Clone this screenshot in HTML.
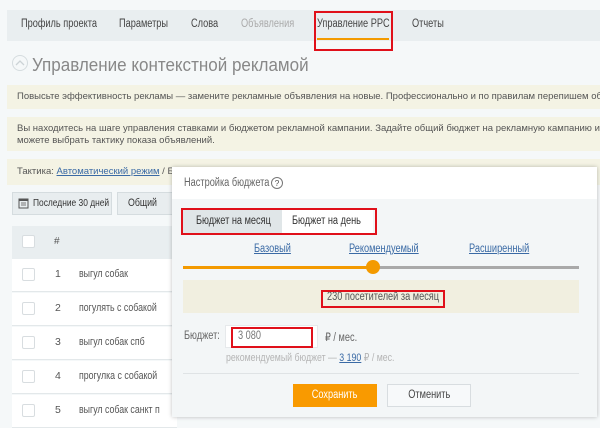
<!DOCTYPE html>
<html><head><meta charset="utf-8"><style>
*{margin:0;padding:0;box-sizing:border-box}
body{width:600px;height:425px;overflow:hidden;background:#f5f8f9;font-family:"Liberation Sans","DejaVu Sans",sans-serif;color:#444;position:relative}
.a{position:absolute;white-space:nowrap}
.c{display:inline-block;transform:scaleX(.8);transform-origin:0 50%;white-space:nowrap}
.cc{display:inline-block;transform:scaleX(.8);transform-origin:50% 50%;white-space:nowrap}
.nav{left:7px;top:10px;width:593px;height:31px;background:#e9eef0}
.nav span{position:absolute;top:8px;font-size:11.5px;color:#444;transform:scaleX(.8);transform-origin:0 50%}
.yb{left:7px;width:593px;background:#f4f3e4;font-size:9.5px;color:#555;padding-left:10px;overflow:hidden}
.rb{border:2px solid #e0101a;position:absolute}
.row{left:12px;width:165px;height:33px;border-bottom:1px solid #e3e8ea;background:#fff;overflow:hidden}
.cb{position:absolute;left:10px;top:9px;width:13px;height:13px;border:1px solid #d8dde0;background:#fff;border-radius:2px}
.row .n{position:absolute;left:43px;top:9px;font-size:10.5px;color:#555}
.row .t{position:absolute;left:67px;top:9px;font-size:11px;color:#555;transform:scaleX(.8);transform-origin:0 50%}
.lk{color:#3a6aa5;text-decoration:underline}
.m{font-size:11.5px}
</style></head><body>
<div class="a nav">
<span style="left:14px">Профиль проекта</span>
<span style="left:112px">Параметры</span>
<span style="left:184px">Слова</span>
<span style="left:234px;color:#aaa">Объявления</span>
<span style="left:310px">Управление PPC</span>
<span style="left:405px">Отчеты</span>
</div>
<div class="a" style="left:317px;top:38px;width:72px;height:2px;background:#f39a00"></div>
<div class="rb" style="left:314px;top:11px;width:79px;height:40px"></div>
<div class="a" style="left:12px;top:55px;width:16px;height:16px;border:1px solid #d5dcdf;border-radius:50%"></div>
<svg class="a" style="left:15px;top:59px" width="10" height="8"><path d="M1 6 L5 2 L9 6" stroke="#ccd3d6" fill="none" stroke-width="1.3"/></svg>
<div class="a" style="left:32px;top:54px;font-size:18.5px;color:#888;transform:scaleX(.92);transform-origin:0 50%">Управление контекстной рекламой</div>
<div class="a yb" style="top:85px;height:24px;line-height:24px">Повысьте эффективность рекламы — замените рекламные объявления на новые. Профессионально и по правилам перепишем объявлени</div>
<div class="a yb" style="top:117px;height:34px;padding-top:6px;line-height:12px">Вы находитесь на шаге управления ставками и бюджетом рекламной кампании. Задайте общий бюджет на рекламную кампанию и поста<br>можете выбрать тактику показа объявлений.</div>
<div class="a yb" style="top:159px;height:26px;line-height:26px">Тактика: <span class="lk" style="font-size:9.5px">Автоматический режим</span> / Б</div>
<div class="a" style="left:12px;top:192px;width:100px;height:23px;background:#e8edef;border:1px solid #d5dcdf;font-size:10.5px;line-height:21px;padding-left:20px;color:#333"><span class="c">Последние 30 дней</span></div>
<svg class="a" style="left:18px;top:197px" width="11" height="12"><rect x="1" y="2" width="9" height="9" fill="none" stroke="#555"/><rect x="1" y="2" width="9" height="2" fill="#555"/><path d="M3 6h5M3 8h5" stroke="#777"/></svg>
<div class="a" style="left:117px;top:192px;width:60px;height:23px;background:#e8edef;border:1px solid #d5dcdf;font-size:11px;line-height:21px;padding-left:10px;color:#333"><span class="c">Общий</span></div>
<div class="a" style="left:12px;top:226px;width:165px;height:33px;background:#e9eef0"><div class="cb" style="top:9px"></div><span style="position:absolute;left:42px;top:10px;font-size:10px;color:#555">#</span></div>
<div class="a row" style="top:259px"><div class="cb"></div><span class="n">1</span><span class="t">выгул собак</span></div>
<div class="a row" style="top:293px"><div class="cb"></div><span class="n">2</span><span class="t">погулять с собакой</span></div>
<div class="a row" style="top:327px"><div class="cb"></div><span class="n">3</span><span class="t">выгул собак спб</span></div>
<div class="a row" style="top:361px"><div class="cb"></div><span class="n">4</span><span class="t">прогулка с собакой</span></div>
<div class="a row" style="top:395px"><div class="cb"></div><span class="n">5</span><span class="t">выгул собак санкт п</span></div>
<!-- modal -->
<div class="a" style="left:172px;top:167px;width:425px;height:250px;background:#f3f6f7;box-shadow:0 0 4px rgba(0,0,0,.25)"></div>
<div class="a" style="left:172px;top:167px;width:425px;height:32px;background:#fff"></div>
<div class="a m" style="left:184px;top:177px;color:#666"><span class="c">Настройка бюджета</span></div>
<div class="a" style="left:271px;top:177px;width:12px;height:12px;border:1px solid #777;border-radius:50%;font-size:8.5px;line-height:10px;text-align:center;color:#555">?</div>
<div class="a m" style="left:183px;top:210px;width:99px;height:23px;background:#e0e6e8;line-height:23px;padding-left:13px;color:#333"><span class="c">Бюджет на месяц</span></div>
<div class="a m" style="left:282px;top:210px;width:91px;height:23px;background:#fff;line-height:23px;padding-left:10px;color:#333"><span class="c">Бюджет на день</span></div>
<div class="rb" style="left:181px;top:208px;width:196px;height:27px"></div>
<span class="a lk c m" style="left:254px;top:243px">Базовый</span>
<span class="a lk c m" style="left:349px;top:243px">Рекомендуемый</span>
<span class="a lk c m" style="left:469px;top:243px">Расширенный</span>
<div class="a" style="left:183px;top:266px;width:190px;height:3px;background:#f39a00"></div>
<div class="a" style="left:373px;top:266px;width:206px;height:3px;background:#a9a9a9"></div>
<div class="a" style="left:366px;top:260px;width:14px;height:14px;border-radius:50%;background:#f39a00"></div>
<div class="a" style="left:183px;top:280px;width:396px;height:33px;background:#f1efe0"></div>
<div class="a m" style="left:327px;top:291px;color:#555"><span class="c">230 посетителей за месяц</span></div>
<div class="rb" style="left:321px;top:290px;width:124px;height:18px"></div>
<div class="a m" style="left:184px;top:330px;color:#666"><span class="c">Бюджет:</span></div>
<div class="a" style="left:225px;top:325px;width:93px;height:23px;background:#fff;border:1px solid #e6e9eb"></div>
<div class="rb" style="left:231px;top:327px;width:82px;height:21px"></div>
<div class="a m" style="left:238px;top:330px;color:#777"><span class="c">3 080</span></div>
<div class="a m" style="left:325px;top:330px;color:#666"><span class="c">₽ / мес.</span></div>
<div class="a" style="left:226px;top:351px;font-size:11px;color:#b5b5b5"><span class="c">рекомендуемый бюджет — <span class="lk">3 190</span> ₽ / мес.</span></div>
<div class="a" style="left:183px;top:373px;width:396px;height:1px;background:#dfe3e5"></div>
<div class="a m" style="left:293px;top:384px;width:84px;height:23px;background:#f99a00;color:#fff;line-height:23px;text-align:center"><span class="cc">Сохранить</span></div>
<div class="a m" style="left:387px;top:384px;width:84px;height:23px;background:#f7f9fa;border:1px solid #d8dde0;color:#444;line-height:21px;text-align:center"><span class="cc">Отменить</span></div>
</body></html>
